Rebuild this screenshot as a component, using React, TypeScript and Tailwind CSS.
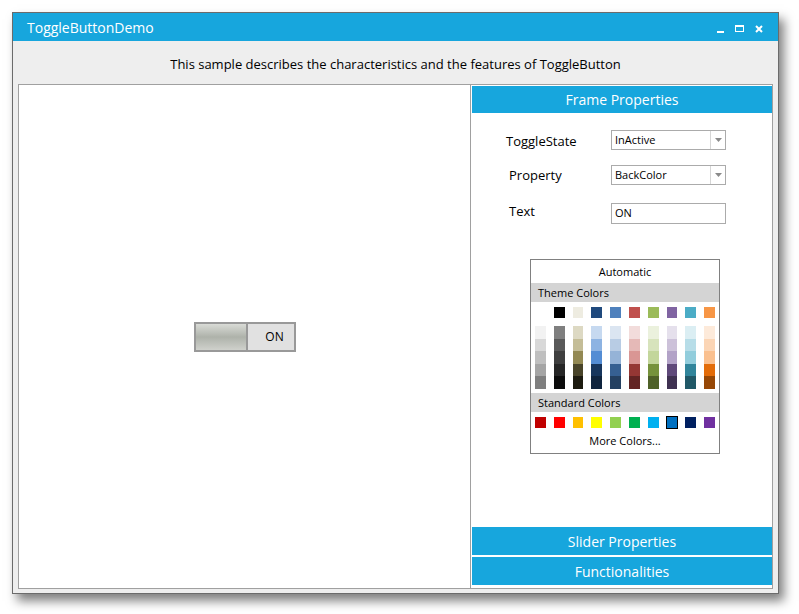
import React from "react";

const themeTop = ["#FFFFFF", "#000000", "#EEECE1", "#1F497D", "#4F81BD", "#C0504D", "#9BBB59", "#8064A2", "#4BACC6", "#F79646"];

const shades = [
  ["#F2F2F2", "#D8D8D8", "#BFBFBF", "#A5A5A5", "#7F7F7F"],
  ["#7F7F7F", "#595959", "#3F3F3F", "#262626", "#0C0C0C"],
  ["#DDD9C3", "#C4BD97", "#938953", "#494429", "#1D1B10"],
  ["#C6D9F0", "#8DB3E2", "#548DD4", "#17365D", "#0F243E"],
  ["#DBE5F1", "#B8CCE4", "#95B3D7", "#366092", "#244061"],
  ["#F2DCDB", "#E5B9B7", "#D99694", "#953734", "#632423"],
  ["#EBF1DD", "#D7E3BC", "#C3D69B", "#76923C", "#4F6128"],
  ["#E5E0EC", "#CCC1D9", "#B2A2C7", "#5F497A", "#3F3151"],
  ["#DBEEF3", "#B7DDE8", "#92CDDC", "#31859B", "#205867"],
  ["#FDEADA", "#FBD5B5", "#FAC08F", "#E36C09", "#974806"],
];

const standard = ["#C00000", "#FF0000", "#FFC000", "#FFFF00", "#92D050", "#00B050", "#00B0F0", "#0070C0", "#002060", "#7030A0"];

const font = { fontFamily: '"Open Sans", "Noto Sans", sans-serif' };

function Dropdown({ value }: { value: string }) {
  return (
    <div className="w-[115px] h-[20px] border border-[#ababab] bg-white flex items-center">
      <span className="flex-1 pl-[3px] text-[11px] text-black">{value}</span>
      <div className="w-[15px] h-full border-l border-[#d6d6d6] flex items-center justify-center">
        <svg width="7" height="4" viewBox="0 0 7 4">
          <path d="M0 0 L7 0 L3.5 4 Z" fill="#8a8a8a" />
        </svg>
      </div>
    </div>
  );
}

function ColorPicker() {
  return (
    <div className="w-[190px] border border-[#808080] bg-white text-[11px] text-black">
      <div className="h-[23px] flex items-center justify-center pt-[2px]">Automatic</div>
      <div className="h-[19px] bg-[#d4d4d4] flex items-center pl-[7px] pt-[2px]">Theme Colors</div>
      <div className="flex gap-[8px] px-[4px] pt-[5px]">
        {themeTop.map((c) => (
          <div key={c} className="w-[11px] h-[11px]" style={{ background: c }} />
        ))}
      </div>
      <div className="flex gap-[8px] px-[4px] pt-[8px] pb-[4px]">
        {shades.map((col, i) => (
          <div key={i} className="w-[11px] flex flex-col">
            {col.map((c, j) => (
              <div key={j} className="h-[12.6px]" style={{ background: c }} />
            ))}
          </div>
        ))}
      </div>
      <div className="h-[19px] bg-[#d4d4d4] flex items-center pl-[7px] pt-[1px]">Standard Colors</div>
      <div className="flex gap-[8px] px-[4px] pt-[5px]">
        {standard.map((c) => (
          <div
            key={c}
            className={c === "#0070C0" ? "w-[11px] h-[11px] outline outline-[1.5px] outline-black" : "w-[11px] h-[11px]"}
            style={{ background: c }}
          />
        ))}
      </div>
      <div className="h-[25px] flex items-center justify-center pt-[2px]">More Colors...</div>
    </div>
  );
}

export default function App() {
  return (
    <div className="min-h-screen bg-white pt-[12px] pl-[12px]" style={font}>
      <div className="w-[767px] h-[582px] border border-[#6b6b6b] bg-[#eeeeee] flex flex-col shadow-[5px_7px_10px_rgba(0,0,0,0.5)]">
        {/* title bar */}
        <div className="h-[28px] bg-[#17a6dd] flex items-center pl-[14px] pr-[15px] text-white">
          <span className="text-[14px] flex-1">ToggleButtonDemo</span>
          <div className="flex items-center gap-[11px] pt-[3px]">
            <div className="w-[7px] h-[2px] bg-white mt-[6px]" />
            <div className="w-[9px] h-[7px] border border-white border-t-[2px]" />
            <svg width="8" height="8" viewBox="0 0 8 8">
              <path d="M1 1 L7 7 M7 1 L1 7" stroke="white" strokeWidth="2" />
            </svg>
          </div>
        </div>

        <div className="h-[43px] flex items-center justify-center pt-[4px] text-[13px] text-black">
          This sample describes the characteristics and the features of ToggleButton
        </div>

        <div className="mx-[5px] h-[505px] border border-[#a0a0a0] bg-white flex">
          {/* left pane */}
          <div className="w-[451px] flex items-center justify-center">
            <div className="w-[102px] h-[30px] border-2 border-[#999999] flex">
              <div className="w-[50px] bg-[linear-gradient(to_bottom,#d9dbd6,#aeb2aa_50%,#cfd1cc)]" />
              <div className="w-[2px] bg-[#999999]" />
              <div className="flex-1 bg-[#e1e1e1] flex items-center justify-center pl-[8px] text-[12px] text-black">ON</div>
            </div>
          </div>
          <div className="w-px bg-[#a0a0a0]" />
          {/* right pane */}
          <div className="flex-1 flex flex-col pl-px pt-px">
            <div className="h-[27px] bg-[#17a6dd] flex items-center justify-center text-white text-[14px]">Frame Properties</div>
            <div className="flex-1 flex flex-col">
              <div className="flex items-center mt-[17px] h-[20px]">
                <span className="w-[139px] pl-[34px] pt-[3px] text-[13px] text-black">ToggleState</span>
                <Dropdown value="InActive" />
              </div>
              <div className="flex items-center mt-[15px] h-[20px]">
                <span className="w-[139px] pl-[37px] pt-[2px] text-[13px] text-black">Property</span>
                <Dropdown value="BackColor" />
              </div>
              <div className="flex items-center mt-[18px] h-[21px]">
                <span className="w-[139px] pl-[37px] text-[13px] text-black -mt-[3px]">Text</span>
                <div className="w-[115px] h-[21px] border border-[#ababab] flex items-center pl-[3px] text-[11px] text-black">ON</div>
              </div>
              <div className="flex pl-[58px] mt-[35px]">
                <ColorPicker />
              </div>
            </div>
            <div className="h-[28px] bg-[#17a6dd] flex items-center justify-center text-white text-[14px]">Slider Properties</div>
            <div className="h-[28px] mt-[2px] mb-[3px] bg-[#17a6dd] flex items-center justify-center text-white text-[14px]">Functionalities</div>
          </div>
        </div>
      </div>
    </div>
  );
}
